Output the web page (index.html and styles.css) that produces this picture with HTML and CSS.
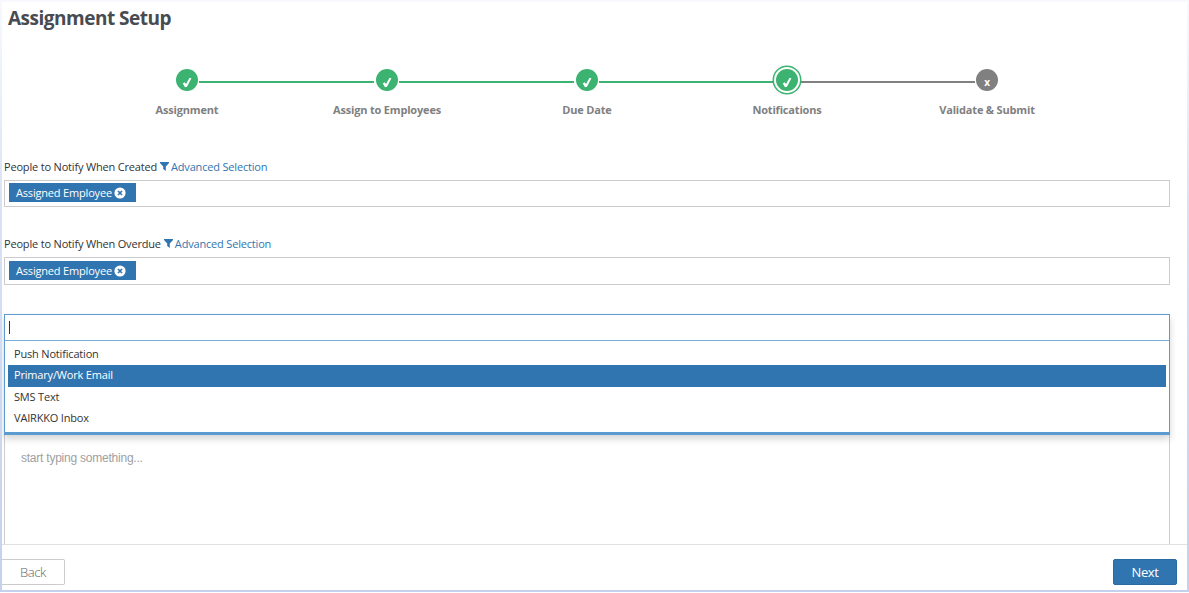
FILE: index.html
```html
<!DOCTYPE html>
<html lang="en">
<head>
    <meta charset="UTF-8">
    <meta name="viewport" content="width=device-width, initial-scale=1.0">
    <title>Assignment Setup</title>
    <link rel="stylesheet" href="styles.css">
</head>
<body>
    <div class="modal">
        <div class="modal-body">
            <h1>Assignment Setup</h1>

            <div class="steps">
                <div class="step done">
                    <span class="dot"><svg width="10" height="11" viewBox="0 0 10 11"><path d="M0.8 6.4 L2.6 5.2 L4 7 L7.6 0.8 L9.4 1.2 L5 9.8 L3 10.2 Z"/></svg></span>
                    <span class="line"></span>
                    <span class="step-label">Assignment</span>
                </div>
                <div class="step done">
                    <span class="dot"><svg width="10" height="11" viewBox="0 0 10 11"><path d="M0.8 6.4 L2.6 5.2 L4 7 L7.6 0.8 L9.4 1.2 L5 9.8 L3 10.2 Z"/></svg></span>
                    <span class="line"></span>
                    <span class="step-label">Assign to Employees</span>
                </div>
                <div class="step done">
                    <span class="dot"><svg width="10" height="11" viewBox="0 0 10 11"><path d="M0.8 6.4 L2.6 5.2 L4 7 L7.6 0.8 L9.4 1.2 L5 9.8 L3 10.2 Z"/></svg></span>
                    <span class="line"></span>
                    <span class="step-label">Due Date</span>
                </div>
                <div class="step current">
                    <span class="dot"><svg width="10" height="11" viewBox="0 0 10 11"><path d="M0.8 6.4 L2.6 5.2 L4 7 L7.6 0.8 L9.4 1.2 L5 9.8 L3 10.2 Z"/></svg></span>
                    <span class="line"></span>
                    <span class="step-label">Notifications</span>
                </div>
                <div class="step">
                    <span class="dot">x</span>
                    <span class="step-label">Validate &amp; Submit</span>
                </div>
            </div>

            <div class="form-group">
                <div class="field-label">
                    <span>People to Notify When Created</span>
                    <a class="advanced"><svg width="9" height="9" viewBox="0 0 9 9"><path d="M0 0 H9 V1 L5.8 4.4 V9 L3.2 7 V4.4 L0 1 Z"/></svg>Advanced Selection</a>
                </div>
                <div class="select-box">
                    <span class="tag">Assigned Employee<svg width="12" height="12" viewBox="0 0 12 12"><circle cx="6" cy="6" r="5.6"/><path d="M4 4 L8 8 M8 4 L4 8"/></svg></span>
                </div>
            </div>

            <div class="form-group">
                <div class="field-label">
                    <span>People to Notify When Overdue</span>
                    <a class="advanced"><svg width="9" height="9" viewBox="0 0 9 9"><path d="M0 0 H9 V1 L5.8 4.4 V9 L3.2 7 V4.4 L0 1 Z"/></svg>Advanced Selection</a>
                </div>
                <div class="select-box">
                    <span class="tag">Assigned Employee<svg width="12" height="12" viewBox="0 0 12 12"><circle cx="6" cy="6" r="5.6"/><path d="M4 4 L8 8 M8 4 L4 8"/></svg></span>
                </div>
            </div>

            <div class="dropdown">
                <div class="dropdown-input"><span class="caret"></span></div>
                <ul class="options">
                    <li>Push Notification</li>
                    <li class="active">Primary/Work Email</li>
                    <li>SMS Text</li>
                    <li>VAIRKKO Inbox</li>
                </ul>
            </div>
            <div class="editor">start typing something...</div>
        </div>
        <div class="modal-footer">
            <button type="button" class="btn btn-back">Back</button>
            <button type="button" class="btn btn-next">Next</button>
        </div>
    </div>
</body>
</html>
```
FILE: styles.css
```css
* {
    box-sizing: border-box;
}
body {
    margin: 0;
    height: 593px;
    overflow: hidden;
    background-color: #fff;
    font-family: "Open Sans", sans-serif;
    font-size: 11px;
    letter-spacing: -0.18px;
    color: #333;
}
.modal {
    height: 592px;
    display: flex;
    flex-direction: column;
    border: 2px solid;
    border-image: linear-gradient(to bottom, #f7f9fe, #d9e2f4 35%, #c3d1ee) 2;
}
.modal-body {
    flex: 1;
    min-height: 0;
    overflow: hidden;
    display: flex;
    flex-direction: column;
    padding: 0 17px 0 2px;
}
h1 {
    margin: 3px 0 0 4px;
    font-size: 19px;
    line-height: 26px;
    font-weight: 700;
    letter-spacing: -0.5px;
    color: #484b4f;
}
.steps {
    display: flex;
    margin: 35px 0 0 83px;
}
.step {
    width: 200px;
    display: grid;
    grid-template-columns: 86px 28px 86px;
    grid-template-rows: 28px 31px;
    justify-items: center;
    align-items: center;
    color: #808080;
}
.dot {
    grid-column: 2;
    width: 22px;
    height: 22px;
    border-radius: 50%;
    background-color: #808080;
    color: #fff;
    font-size: 10px;
    font-weight: 700;
    display: flex;
    align-items: center;
    justify-content: center;
    padding-top: 4px;
}
.dot svg {
    fill: #fff;
}
.done .dot,
.current .dot {
    background-color: #3cb371;
}
.current .dot {
    box-shadow: 0 0 0 2px #fff, 0 0 0 3.5px #3cb371;
}
.line {
    grid-column: 3;
    justify-self: start;
    width: 175px;
    height: 2px;
    margin: 4px 0 0 -2px;
    background-color: #808080;
}
.done .line {
    background-color: #3cb371;
}
.current .line {
    width: 174px;
    margin-left: 0;
}
.step-label {
    grid-column: 1 / 4;
    grid-row: 2;
    font-weight: 700;
    white-space: nowrap;
}
.form-group {
    height: 77px;
}
.form-group + .form-group {
    height: 79px;
}
.steps + .form-group {
    margin-top: 33px;
}
.field-label {
    display: flex;
    align-items: center;
    height: 16px;
    margin-bottom: 6px;
}
.advanced {
    display: flex;
    align-items: center;
    margin-left: 3px;
    color: #3175b0;
}
.advanced svg {
    margin-right: 2px;
    fill: #3175b0;
}
.select-box {
    height: 28px;
    border: 1px solid #ccc;
    padding: 3px 4px;
}
.steps + .form-group .select-box {
    height: 27px;
    padding-top: 2px;
}
.tag {
    display: flex;
    align-items: center;
    width: 127px;
    height: 19px;
    padding-left: 7px;
    background-color: #3175b0;
    color: #fff;
}
.tag svg {
    margin-left: 2px;
    fill: #fff;
    stroke: #3175b0;
    stroke-width: 1.7;
}
.tag circle {
    stroke: none;
}
.dropdown {
    position: relative;
    flex-shrink: 0;
    height: 121px;
    border: 1px solid #5b9bd0;
    border-bottom-width: 3px;
    box-shadow: 0 4px 7px rgba(0, 0, 0, 0.17);
    background-color: #fff;
}
.dropdown-input {
    height: 26px;
    padding: 6px 4px;
    border-bottom: 1px solid #78acd9;
}
.caret {
    display: block;
    width: 1px;
    height: 13px;
    background-color: #333;
}
.options {
    margin: 0;
    padding: 3px;
    list-style: none;
}
.options li {
    height: 21px;
    line-height: 20px;
    padding-left: 6px;
}
.options .active {
    height: 22px;
    background-color: #3175b0;
    color: #fff;
    font-weight: 500;
}
.editor {
    flex: 1;
    padding: 16px;
    border: 1px solid #ccc;
    border-width: 0 1px;
    font-family: "Liberation Sans", Arial, sans-serif;
    font-size: 12px;
    letter-spacing: -0.23px;
    color: #a0a0a0;
}
.modal-footer {
    display: flex;
    justify-content: space-between;
    height: 46px;
    padding: 14px 10px 0 0;
    border-top: 1px solid #e0e0e0;
}
.btn {
    height: 26px;
    padding: 0;
    border: 1px solid #ccc;
    border-radius: 2px;
    font-family: "Open Sans", sans-serif;
    font-size: 13px;
    letter-spacing: -0.4px;
    font-weight: 300;
}
.btn-back {
    width: 63px;
    border-left: none;
    border-radius: 0 2px 2px 0;
    background-color: #fff;
    color: #666;
}
.btn-next {
    width: 64px;
    border-color: #2a6aa3;
    background-color: #3175b0;
    color: #fff;
    font-weight: 400;
}
```
